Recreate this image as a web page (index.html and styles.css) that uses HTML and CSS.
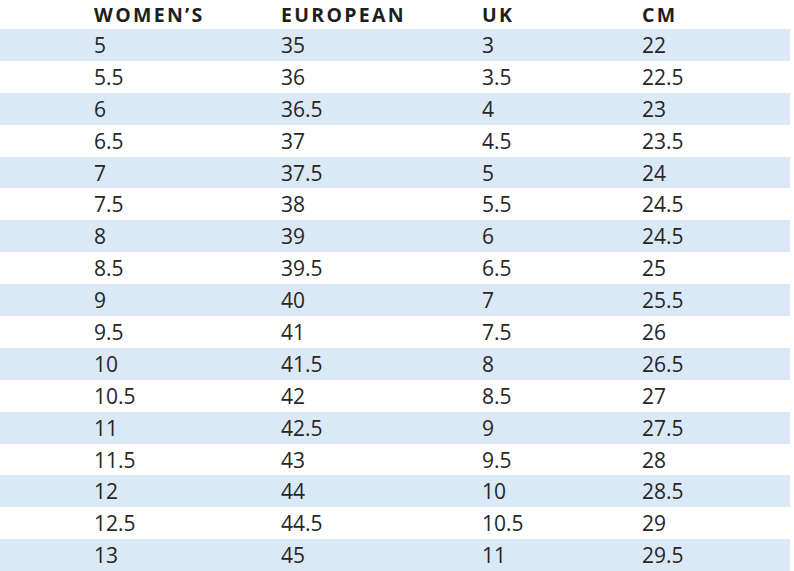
FILE: index.html
```html
<!DOCTYPE html>
<html lang="en">
<head>
<meta charset="utf-8">
<title>Size chart</title>
<link rel="stylesheet" href="styles.css">
</head>
<body>
<div class="chart">
  <div class="row head"><span>WOMEN’S</span><span>EUROPEAN</span><span>UK</span><span>CM</span></div>
  <div class="row alt"><span>5</span><span>35</span><span>3</span><span>22</span></div>
  <div class="row"><span>5.5</span><span>36</span><span>3.5</span><span>22.5</span></div>
  <div class="row alt"><span>6</span><span>36.5</span><span>4</span><span>23</span></div>
  <div class="row"><span>6.5</span><span>37</span><span>4.5</span><span>23.5</span></div>
  <div class="row alt"><span>7</span><span>37.5</span><span>5</span><span>24</span></div>
  <div class="row"><span>7.5</span><span>38</span><span>5.5</span><span>24.5</span></div>
  <div class="row alt"><span>8</span><span>39</span><span>6</span><span>24.5</span></div>
  <div class="row"><span>8.5</span><span>39.5</span><span>6.5</span><span>25</span></div>
  <div class="row alt"><span>9</span><span>40</span><span>7</span><span>25.5</span></div>
  <div class="row"><span>9.5</span><span>41</span><span>7.5</span><span>26</span></div>
  <div class="row alt"><span>10</span><span>41.5</span><span>8</span><span>26.5</span></div>
  <div class="row"><span>10.5</span><span>42</span><span>8.5</span><span>27</span></div>
  <div class="row alt"><span>11</span><span>42.5</span><span>9</span><span>27.5</span></div>
  <div class="row"><span>11.5</span><span>43</span><span>9.5</span><span>28</span></div>
  <div class="row alt"><span>12</span><span>44</span><span>10</span><span>28.5</span></div>
  <div class="row"><span>12.5</span><span>44.5</span><span>10.5</span><span>29</span></div>
  <div class="row alt"><span>13</span><span>45</span><span>11</span><span>29.5</span></div>
</div>
</body>
</html>
```
FILE: styles.css
```css
html, body {
  margin: 0;
  padding: 0;
  background: #ffffff;
}
.chart {
  width: 790px;
  font-family: "Open Sans", "Liberation Sans", sans-serif;
  color: #262626;
}
.row {
  display: grid;
  grid-template-columns: 187px 201px 160px 1fr;
  padding-left: 94px;
  height: 31.9px;
  align-items: center;
  font-size: 21px;
  font-weight: 400;
}
.row span {
  white-space: nowrap;
}
.row.head {
  height: 29px;
  font-size: 19.5px;
  font-weight: 700;
  color: #1e1e1e;
  letter-spacing: 2.3px;
}
.row.alt {
  background: #dbe9f6;
}
```
